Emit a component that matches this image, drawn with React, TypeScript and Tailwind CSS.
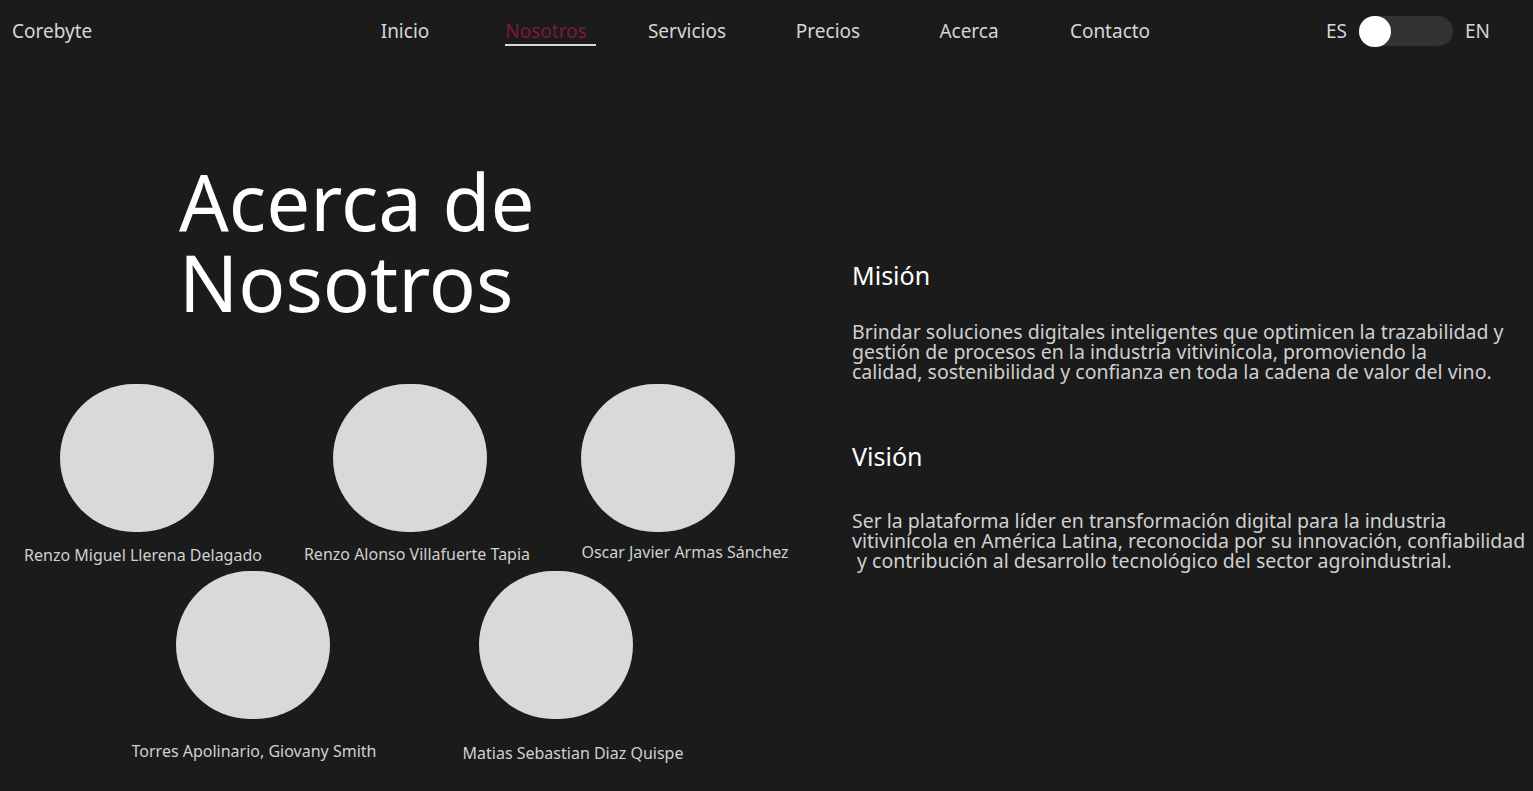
const NAV_LINKS = ['Inicio', 'Nosotros', 'Servicios', 'Precios', 'Acerca', 'Contacto']

const TEAM_TOP = [
  {
    name: 'Renzo Miguel Llerena Delagado',
    card: 'ml-[13px]',
    circle: 'ml-[47px]',
    label: 'mt-[11px]',
  },
  {
    name: 'Renzo Alonso Villafuerte Tapia',
    card: 'ml-[14px]',
    circle: 'ml-[46px]',
    label: 'mt-[10px]',
  },
  {
    name: 'Oscar Javier Armas Sánchez',
    card: 'ml-[8px]',
    circle: 'ml-[26px]',
    label: 'mt-[8px]',
  },
]

const TEAM_BOTTOM = [
  {
    name: 'Torres Apolinario, Giovany Smith',
    card: 'ml-[124px]',
    circle: 'ml-[52px]',
    label: 'mt-[20px]',
  },
  {
    name: 'Matias Sebastian Diaz Quispe',
    card: 'ml-[59px]',
    circle: 'ml-[36px]',
    label: 'mt-[22px]',
  },
]

type Member = { name: string; card: string; circle: string; label: string }

function MemberCard({ member }: { member: Member }) {
  return (
    <div className={`${member.card} w-[260px] flex flex-col`}>
      <div className={`${member.circle} w-[154px] h-[148px] rounded-full bg-[#d9d9d9]`} />
      <p className={`${member.label} text-center whitespace-nowrap text-[16px] leading-6 text-[#d0d0d0]`}>
        {member.name}
      </p>
    </div>
  )
}

function Header() {
  return (
    <header className="h-[62px] flex items-center pl-[12px] pr-[43px]">
      <span className="w-[322.5px] text-[19px] text-[#d6d6d6]">Corebyte</span>

      <nav className="flex">
        {NAV_LINKS.map((link) => (
          <a key={link} href="#" className="w-[141px] flex justify-center text-[19px]">
            {link === 'Nosotros' ? (
              <span className="relative text-[#7b1a3c]">
                {link}
                <span className="absolute left-0 -right-[9px] top-[27px] h-[2px] bg-[#d9d9d9]" />
              </span>
            ) : (
              <span className="text-[#d6d6d6]">{link}</span>
            )}
          </a>
        ))}
      </nav>

      <div className="ml-auto flex items-center gap-[12px] text-[19px] text-[#d6d6d6]">
        <span>ES</span>
        <button className="w-[94px] h-[30px] rounded-full bg-[#323232] flex items-center">
          <span className="w-[32px] h-[31px] rounded-full bg-white" />
        </button>
        <span>EN</span>
      </div>
    </header>
  )
}

export default function App() {
  return (
    <div className="w-full min-h-[791px] bg-[#1b1b1b] font-['Noto_Sans',_'Open_Sans',_sans-serif] overflow-hidden">
      <Header />

      <main className="flex">
        <section className="w-[852px] shrink-0 pt-[99px]">
          <h1 className="ml-[179px] text-[78px] leading-[81px] text-white">
            Acerca de
            <br />
            Nosotros
          </h1>

          <div className="mt-[61px] flex">
            {TEAM_TOP.map((member) => (
              <MemberCard key={member.name} member={member} />
            ))}
          </div>

          <div className="mt-[4px] flex">
            {TEAM_BOTTOM.map((member) => (
              <MemberCard key={member.name} member={member} />
            ))}
          </div>
        </section>

        <section className="pt-[195px] whitespace-nowrap">
          <h2 className="text-[25px] text-white">Misión</h2>
          <p className="mt-[27px] text-[19.5px] leading-5 text-[#d0d0d0]">
            Brindar soluciones digitales inteligentes que optimicen la trazabilidad y
            <br />
            gestión de procesos en la industria vitivinícola, promoviendo la
            <br />
            calidad, sostenibilidad y confianza en toda la cadena de valor del vino.
          </p>

          <h2 className="mt-[56px] text-[25px] text-white">Visión</h2>
          <p className="mt-[36px] text-[19.5px] leading-5 text-[#d0d0d0]">
            Ser la plataforma líder en transformación digital para la industria
            <br />
            vitivinícola en América Latina, reconocida por su innovación, confiabilidad
            <br />
            {'\u00a0'}y contribución al desarrollo tecnológico del sector agroindustrial.
          </p>
        </section>
      </main>
    </div>
  )
}
